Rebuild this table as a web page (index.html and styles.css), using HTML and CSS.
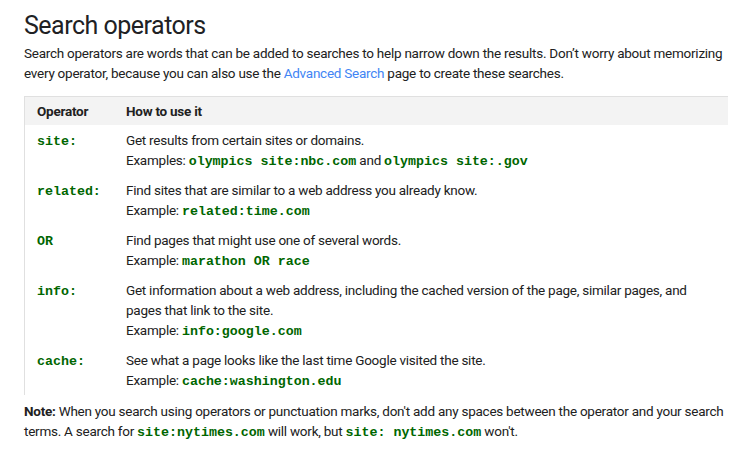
FILE: index.html
```html
<!DOCTYPE html>
<html>
<head>
<meta charset="utf-8">
<link rel="stylesheet" href="styles.css">
</head>
<body>
<div class="page">
  <h2 class="title">Search operators</h2>
  <p class="intro">Search operators are words that can be added to searches to help narrow down the results. Don’t worry about memorizing every operator, because you can also use the <a class="link" href="#">Advanced Search</a> page to create these searches.</p>
  <table class="ops">
    <thead>
      <tr><th class="c1">Operator</th><th class="c2">How to use it</th></tr>
    </thead>
    <tbody>
      <tr><td class="c1"><code>site:</code></td><td class="c2">Get results from certain sites or domains.<br>Examples: <code>olympics site:nbc.com</code> and <code>olympics site:.gov</code></td></tr>
      <tr><td class="c1"><code>related:</code></td><td class="c2">Find sites that are similar to a web address you already know.<br>Example: <code>related:time.com</code></td></tr>
      <tr><td class="c1"><code>OR</code></td><td class="c2">Find pages that might use one of several words.<br>Example: <code>marathon OR race</code></td></tr>
      <tr><td class="c1"><code>info:</code></td><td class="c2">Get information about a web address, including the cached version of the page, similar pages, and pages that link to the site.<br>Example: <code>info:google.com</code></td></tr>
      <tr><td class="c1"><code>cache:</code></td><td class="c2">See what a page looks like the last time Google visited the site.<br>Example: <code>cache:washington.edu</code></td></tr>
    </tbody>
  </table>
  <p class="note"><strong>Note:</strong> When you search using operators or punctuation marks, don't add any spaces between the operator and your search terms. A search for <code>site:nytimes.com</code> will work, but <code>site: nytimes.com</code> won't.</p>
</div>
</body>
</html>
```
FILE: styles.css
```css
html, body {
  margin: 0;
  padding: 0;
  background: #fff;
}
.page {
  padding: 0 10px 0 24px;
  font-family: Roboto, "Liberation Sans", sans-serif;
  font-size: 13.5px;
  letter-spacing: -0.25px;
  line-height: 20px;
  color: #212121;
}
.title {
  margin: 0;
  padding-top: 10px;
  font-size: 25px;
  letter-spacing: -0.5px;
  line-height: 32px;
  font-weight: 400;
  color: #202124;
}
.intro {
  margin: 1px 0 0 0;
}
.link {
  color: #4285f4;
  text-decoration: none;
}
code {
  font-family: "Liberation Mono", "Courier New", monospace;
  font-weight: bold;
  color: #006600;
  font-size: 13.3px;
  letter-spacing: 0;
  line-height: 1;
}
.ops {
  margin-top: 13px;
  width: 100%;
  border-collapse: collapse;
  border-top: 1px solid #e0e0e0;
  border-left: 1px solid #e0e0e0;
}
.ops th {
  background: #f3f3f3;
  text-align: left;
  font-weight: 700;
  padding: 4px 12px;
  color: #212121;
}
.ops td {
  vertical-align: top;
  padding: 5px 12px;
}
.ops .c1 {
  width: 65px;
}
.note {
  margin: 6px 0 0 0;
}
.note strong {
  font-weight: 700;
}
```
